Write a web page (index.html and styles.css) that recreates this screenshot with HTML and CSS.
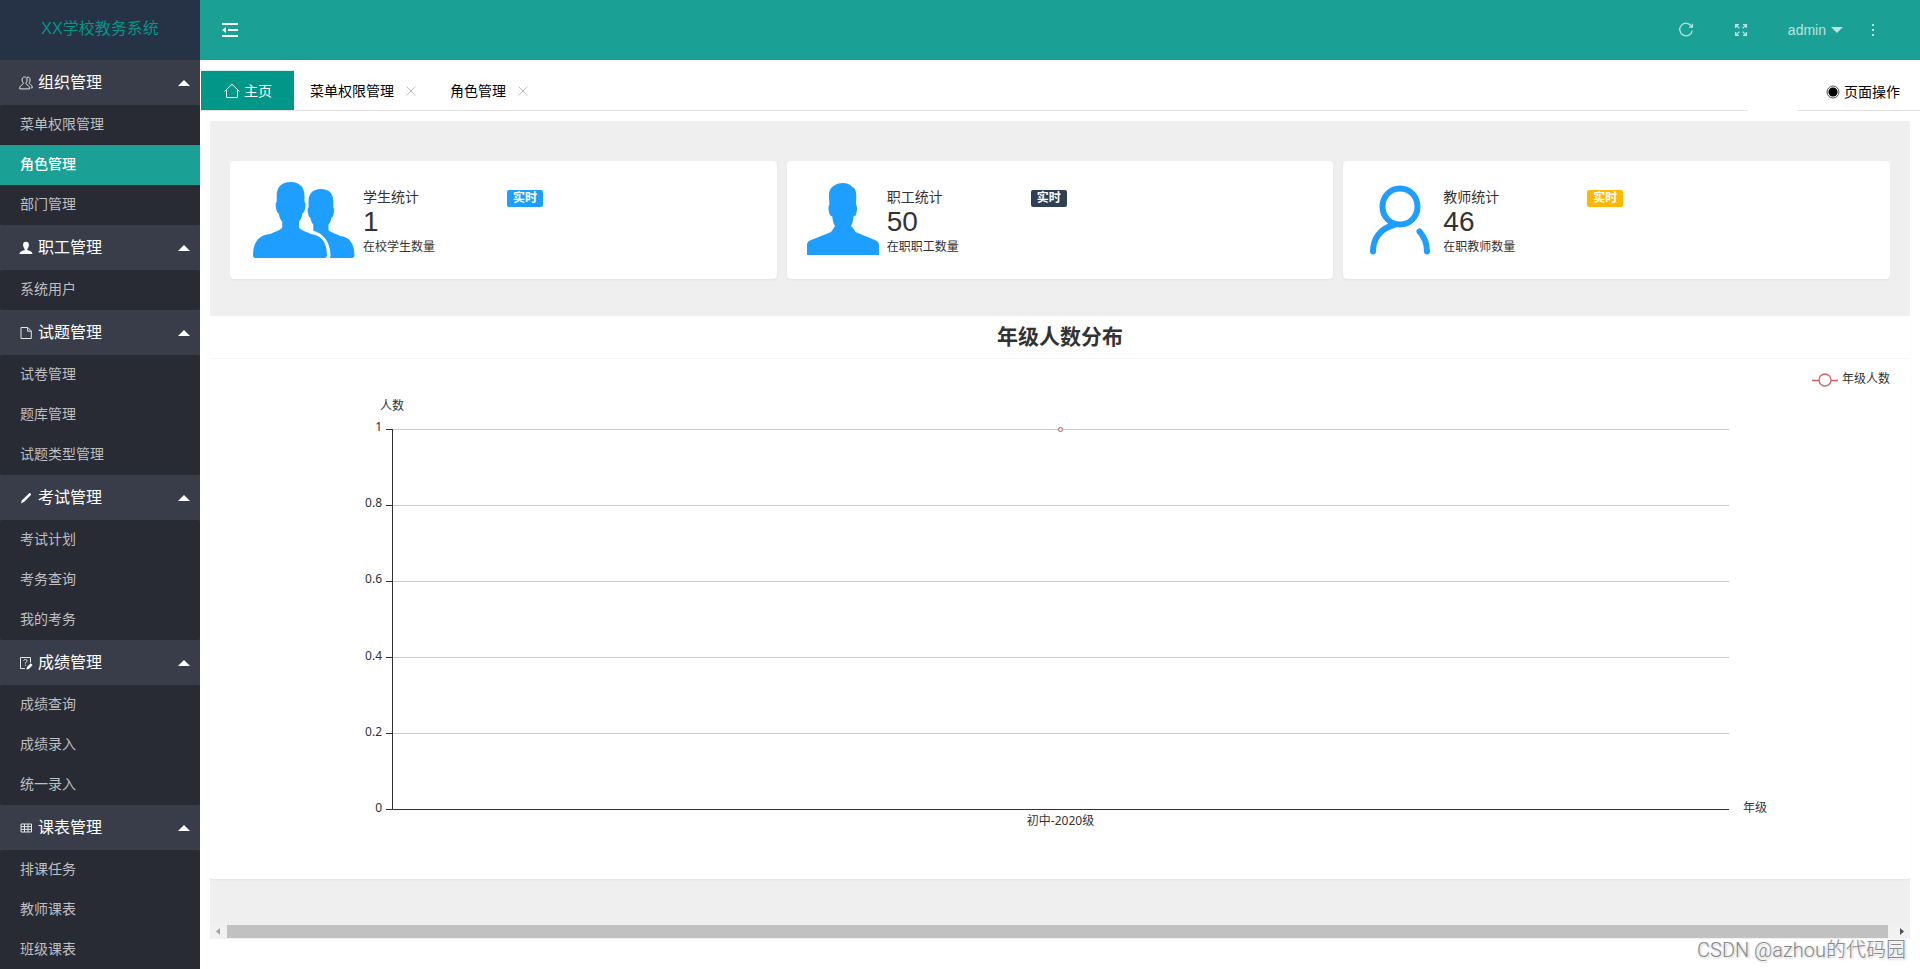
FILE: index.html
```html
<!DOCTYPE html>
<html lang="zh-CN">
<head>
<meta charset="utf-8">
<title>XX学校教务系统</title>
<link rel="stylesheet" href="styles.css">
</head>
<body>
<div class="app">
  <aside class="sidebar">
    <div class="logo">XX学校教务系统</div>
    <nav class="menu">
      <button class="group" type="button">
        <svg class="group-icon" viewBox="0 0 14 14"><path d="M5.6 1C3.700 1 3 2.400 3.100 4c.1 1.400.6 2.200 1.100 2.900.3.9-.1 1.300-1 1.800C1.600 9.600.8 10.400.7 12.900h9.800c-.1-2.500-.9-3.300-2.500-4.200-.9-.5-1.300-.9-1-1.800.5-.7 1-1.500 1.100-2.900C8.200 2.400 7.500 1 5.600 1z"/><path d="M8 1.300c1.700-.6 3.200.5 3.100 2.600 0 1.300-.4 2-.9 2.600-.3.8.1 1.100.9 1.600 1.400.9 2.100 1.900 2.200 3.800h-1.600"/></svg>
        <span>组织管理</span><i class="caret-up"></i>
      </button>
      <div class="items">
        <a href="#">菜单权限管理</a>
        <a href="#" class="current">角色管理</a>
        <a href="#">部门管理</a>
      </div>
      <button class="group" type="button">
        <svg class="group-icon" viewBox="0 0 14 14"><path class="solid" d="M7 .8C4.900.8 4 2 4.100 4.100c.1 1.800.7 3 1.600 3.900v1.100C4.500 9.800.6 10.100.5 13h13c-.1-2.900-4-3.200-5.200-3.900V8c.9-.9 1.500-2.100 1.600-3.900C10 2 9.100.8 7 .8z"/></svg>
        <span>职工管理</span><i class="caret-up"></i>
      </button>
      <div class="items">
        <a href="#">系统用户</a>
      </div>
      <button class="group" type="button">
        <svg class="group-icon" viewBox="0 0 14 14"><path d="M2 1.500h6.800L12.300 5v7.500H2zM8.600 1.700v3.500h3.500"/></svg>
        <span>试题管理</span><i class="caret-up"></i>
      </button>
      <div class="items">
        <a href="#">试卷管理</a>
        <a href="#">题库管理</a>
        <a href="#">试题类型管理</a>
      </div>
      <button class="group" type="button">
        <svg class="group-icon" viewBox="0 0 14 14"><path class="solid" d="M10.200 2.200c.8-.6 2.400.9 1.700 1.800L5.300 10.800l-3.300 1.600 1-3.200z"/></svg>
        <span>考试管理</span><i class="caret-up"></i>
      </button>
      <div class="items">
        <a href="#">考试计划</a>
        <a href="#">考务查询</a>
        <a href="#">我的考务</a>
      </div>
      <button class="group" type="button">
        <svg class="group-icon" viewBox="0 0 14 14"><path d="M6 12.500H1.500v-11h10V6.500M4.700 4.900c0-2 3.500-1.900 3.400 0C8 6 6.400 6 6.400 7.600M6.400 8.700v1"/><path class="solid" d="M11.700 7.300l1.900 1.800-3.700 3.800-2.500.7.600-2.500z"/></svg>
        <span>成绩管理</span><i class="caret-up"></i>
      </button>
      <div class="items">
        <a href="#">成绩查询</a>
        <a href="#">成绩录入</a>
        <a href="#">统一录入</a>
      </div>
      <button class="group" type="button">
        <svg class="group-icon" viewBox="0 0 14 14"><path d="M2 3h10.500v8H2zM2 5.600h10.500M2 8.300h10.500M5.500 3v8M9 3v8"/></svg>
        <span>课表管理</span><i class="caret-up"></i>
      </button>
      <div class="items">
        <a href="#">排课任务</a>
        <a href="#">教师课表</a>
        <a href="#">班级课表</a>
      </div>
    </nav>
  </aside>

  <div class="page">
    <header class="topbar">
      <button class="icon-btn" type="button" aria-label="收起菜单">
        <svg width="16" height="16" viewBox="0 0 16 16"><path fill="#fff" d="M0 1h16v2H0zM6 7h10v2H6zM0 13h16v2H0zM0 8l4-3v6z"/></svg>
      </button>
      <div class="tools">
        <button class="icon-btn" type="button" aria-label="刷新">
          <svg width="16" height="16" viewBox="0 0 16 16"><path class="tool-line" d="M13.600 4.500A6.300 6.300 0 1 0 14.300 8.500M14.400 1.800v3.400h-3.400"/></svg>
        </button>
        <button class="icon-btn" type="button" aria-label="全屏">
          <svg width="14" height="14" viewBox="0 0 14 14"><path class="tool-line" d="M1.600 5V1.600H5M9 1.600h3.400V5M12.400 9v3.400H9M5 12.400H1.600V9M2 2l3.400 3.400M12 2L8.600 5.400M12 12L8.600 8.600M2 12l3.400-3.400"/></svg>
        </button>
        <button class="user" type="button">admin<i class="caret-down"></i></button>
        <button class="icon-btn more" type="button" aria-label="更多">
          <svg width="4" height="14" viewBox="0 0 4 14"><path class="tool-fill" d="M1 1h2v2H1zM1 6h2v2H1zM1 11h2v2H1z"/></svg>
        </button>
      </div>
    </header>

    <div class="tabbar">
      <div class="tabs">
        <button class="tab active" type="button">
          <svg width="18" height="16" viewBox="0 0 18 16"><path d="M1.500 8.500L9 1.300l7.500 7.200M3.500 7v7.500h11V7" fill="none" stroke="#fff" stroke-width="1"/></svg>
          <span>主页</span>
        </button>
        <button class="tab" type="button"><span>菜单权限管理</span>
          <svg class="close" width="18" height="18" viewBox="0 0 18 18"><path d="M4.500 4.500l9 9M13.500 4.500l-9 9"/></svg>
        </button>
        <button class="tab" type="button"><span>角色管理</span>
          <svg class="close" width="18" height="18" viewBox="0 0 18 18"><path d="M4.500 4.500l9 9M13.500 4.500l-9 9"/></svg>
        </button>
      </div>
      <button class="page-ops" type="button">
        <svg width="14" height="14" viewBox="0 0 14 14"><circle cx="7" cy="7" r="6" fill="none" stroke="#555"/><circle cx="7" cy="7" r="4.600"/></svg>
        <span>页面操作</span>
      </button>
    </div>

    <main class="content">
      <section class="cards">
        <article class="card">
          <svg class="pic-pair" width="103" height="78" viewBox="0 0 103 78"><path d="M38.500 1C29 1 24.500 7 24.700 15v6c-1.500 1-1.200 4 .2 9.600.4 1.400 1.400 1.200 1.800 1.600.5 4 2 6.800 3.500 8.600v5.600c-1.500 2.600-8 4.600-12 6.600C7 54 1 61 1 74.500c0 1.600 1 2.500 2.500 2.500h69c1.500 0 2.500-.9 2.500-2.500C75 61 69 54 59 53c-4-2-10.500-4-12-6.600v-5.600c1.500-1.800 3-4.600 3.500-8.600.4-.4 1.400-.2 1.800-1.600 1.400-5.600 1.700-8.600.2-9.600v-6C52.700 7 48 1 38.500 1z"/><path d="M69 8c-9 0-12.700 5.500-12.500 13v5.500c-1.300 1-1 3.800.2 8.600.4 1.300 1.200 1.100 1.600 1.500.5 3.500 1.700 5.500 3 7.200v6c8 2 17.200 9.500 17.200 25.200 0 .8-.3 1.400-.7 2H100c1.500 0 2.500-.9 2.500-2.500C102.500 63 97.500 55.500 88 55c-5-2.500-10-4-11.500-6v-5.200c1.300-1.700 2.500-3.700 3-7.200.4-.4 1.200-.2 1.600-1.500 1.200-4.800 1.500-7.600.2-8.600V21C81.500 13.500 78 8 69 8z"/></svg>
          <div class="stat"><h3>学生统计</h3><strong>1</strong><p>在校学生数量</p></div>
          <span class="badge blue">实时</span>
        </article>
        <article class="card">
          <svg class="pic-one" width="72" height="74" viewBox="0 0 72 74"><path d="M36 1c-4 0-7 1-9.500 3C22.500 6.500 21.700 11 22 16l.5 6.500c-1.500 1-1.200 6 .3 10 .5 1.500 2 1.500 2.500 2 .3 4 1 7 2.700 9.500-1 2-2.500 4-4 6L3 58.500c-2 1-3 2.500-3 4.500v10h72V63c0-2-1-3.500-3-4.500L48.500 50c-1-2-2-4-4.500-6 1.500-2.500 2.200-5.500 2.500-9.500 1-.5 2-.5 2.500-2 1.500-4 1.300-9 0-10l.3-6.500c.2-5-.6-10-4-11C43 2.500 40 1 36 1z"/></svg>
          <div class="stat"><h3>职工统计</h3><strong>50</strong><p>在职职工数量</p></div>
          <span class="badge navy">实时</span>
        </article>
        <article class="card">
          <svg class="pic-line" width="62" height="70" viewBox="0 0 62 70"><path d="M31 3.500c-10 0-17.500 8-17.500 18S21 39.500 31 39.500s17.500-8 17.500-18-7.500-18-17.500-18zM25 40C11 43.500 4 54 4 66.500M50.500 46.500c4.500 5 7.500 12 7.500 20"/></svg>
          <div class="stat"><h3>教师统计</h3><strong>46</strong><p>在职教师数量</p></div>
          <span class="badge amber">实时</span>
        </article>
      </section>

      <section class="panel">
        <h2>年级人数分布</h2>
        <div class="legend">
          <svg width="26" height="14" viewBox="0 0 26 14"><path d="M0 7.500h7M19 7.500h7"/><circle cx="13" cy="7" r="6"/></svg>
          <span>年级人数</span>
        </div>
        <div class="chart">
          <div class="y-name">人数</div>
          <div class="y-labels"><span>1</span><span>0.8</span><span>0.6</span><span>0.4</span><span>0.2</span><span>0</span></div>
          <div class="ticks"><i></i><i></i><i></i><i></i><i></i></div>
          <div class="plot">
            <i></i><i></i><i></i><i></i><i></i>
            <svg class="point" width="7" height="7" viewBox="0 0 7 7"><circle cx="3.500" cy="3.500" r="2" fill="#fff" stroke="#d0504d"/></svg>
          </div>
          <div class="x-name">年级</div>
          <div class="x-label">初中-2020级</div>
        </div>
      </section>

      <div class="scrollbar">
        <svg width="17" height="15" viewBox="0 0 17 15"><path d="M10 4v7L6 7.500z" fill="#a3a3a3"/></svg>
        <div class="thumb"></div>
        <svg width="22" height="15" viewBox="0 0 22 15"><path d="M12 4v7l4-3.500z" fill="#505050"/></svg>
      </div>
    </main>
  </div>
  <div class="watermark">CSDN @azhou的代码园</div>
</div>
</body>
</html>
```
FILE: styles.css
```css
* { box-sizing: border-box; }
body {
  margin: 0;
  font: 14px/24px "Liberation Sans", "Noto Sans CJK SC", sans-serif;
  color: #333;
  background: #fff;
}
button {
  border: 0;
  padding: 0;
  background: none;
  font: inherit;
  color: inherit;
  text-align: left;
  cursor: pointer;
}
h2, h3, p { margin: 0; font-weight: normal; }
svg { flex: none; display: block; }

.app {
  position: relative;
  display: flex;
  height: 100vh;
  overflow: hidden;
}

/* Sidebar */
.sidebar {
  flex: none;
  width: 200px;
  background: #393d49;
  overflow: hidden;
}
.logo {
  height: 60px;
  line-height: 58px;
  text-align: center;
  font-size: 16px;
  font-family: "Liberation Sans", "Noto Sans CJK SC", sans-serif;
  color: #009688;
  background: #263347;
}
.group {
  display: flex;
  align-items: center;
  gap: 5px;
  width: 100%;
  height: 45px;
  padding: 0 10px 0 19px;
  font-size: 16px;
  color: #fff;
}
.group-icon {
  width: 14px;
  height: 14px;
  fill: none;
  stroke: #e4e5e7;
  stroke-width: 1;
}
.group-icon .solid { fill: #fff; stroke: none; }
.caret-up {
  margin-left: auto;
  border: 6px solid transparent;
  border-top: 0;
  border-bottom-color: #fff;
}
.items {
  background: #282b33;
  border-radius: 2px;
  overflow: hidden;
}
.items a {
  display: block;
  height: 40px;
  padding-left: 20px;
  line-height: 39px;
  color: #bfbfc2;
  text-decoration: none;
}
.items .current { background: #1aa094; color: #fff; font-weight: 500; }

/* Top bar */
.page { flex: 1; min-width: 0; }
.topbar {
  display: flex;
  align-items: center;
  justify-content: space-between;
  height: 60px;
  padding: 0 45px 0 22px;
  background: #1aa094;
}
.tools { display: flex; align-items: center; gap: 40px; color: #bae3df; }
.user { display: flex; align-items: center; gap: 5px; }
.more { margin-left: -12px; }
.caret-down {
  border: 6px solid transparent;
  border-bottom: 0;
  border-top-color: #bae3df;
}
.tool-line { fill: none; stroke: #bae3df; stroke-width: 1.3; }
.tool-fill { fill: #bae3df; }

/* Tabs */
.tabbar {
  display: flex;
  align-items: flex-end;
  gap: 49px;
  height: 51px;
}
.tabs {
  flex: 1;
  display: flex;
  height: 41px;
  padding-left: 1px;
  border-bottom: 1px solid #e2e2e2;
}
.tab {
  display: flex;
  align-items: center;
  gap: 8px;
  height: 40px;
  padding: 2px 15px 0;
  color: #000;
}
.tab.active {
  gap: 3px;
  margin-right: 1px;
  padding: 0 22px;
  background: #009688;
  border-top: 1px solid #d8ecea;
  color: #fff;
}
.close { fill: none; stroke: #bbb; stroke-width: 1; }
.page-ops {
  display: flex;
  align-items: center;
  gap: 4px;
  height: 41px;
  padding: 4px 20px 0 29px;
  border-bottom: 1px solid #e2e2e2;
  color: #000;
}

/* Content */
.content {
  margin: 10px 10px 0;
  background: #efefef;
}
.cards {
  display: grid;
  grid-template-columns: repeat(3, 1fr);
  gap: 10px;
  padding: 40px 20px 37px;
}
.card {
  display: flex;
  align-items: flex-start;
  height: 118px;
  border-radius: 4px;
  background: #fff;
  box-shadow: 0 1px 2px rgba(0, 0, 0, .05);
  fill: #1e9fff;
}
.pic-pair { margin: 20px 8px 0 22px; }
.pic-one { margin: 21px 8px 0 20px; }
.pic-line {
  margin: 24px 12px 0 26px;
  fill: none;
  stroke: #1e9fff;
  stroke-width: 6;
  stroke-linecap: round;
}
.stat {
  width: 144px;
  padding-top: 25px;
}
.stat h3 { font-size: 14px; line-height: 22px; }
.stat strong { display: block; font-size: 28px; font-weight: normal; line-height: 28px; }
.stat p { font-size: 12px; line-height: 22px; }
.badge {
  height: 17px;
  margin-top: 29px;
  padding: 0 6px;
  border-radius: 2px;
  font-size: 12px;
  font-weight: bold;
  line-height: 16px;
  color: #fff;
}
.blue { background: #1e9fff; }
.navy { background: #2f4056; }
.amber { background: #ffb800; }

/* Chart panel */
.panel {
  height: 563px;
  border-radius: 2px;
  background: #fff;
  box-shadow: 0 1px 2px rgba(0, 0, 0, .05);
}
.panel h2 {
  height: 43px;
  border-bottom: 1px solid #f6f6f6;
  font-size: 21px;
  font-weight: bold;
  line-height: 42px;
  text-align: center;
}
.legend {
  display: flex;
  align-items: center;
  justify-content: flex-end;
  gap: 4px;
  height: 38px;
  padding: 4px 20px 0 0;
  font-size: 12px;
  line-height: 20px;
}
.legend span { padding-bottom: 3px; }
.legend svg { fill: none; stroke: #d0625f; stroke-width: 1.3; }
.chart {
  display: grid;
  grid-template-columns: 174px 8px 1fr 181px;
  grid-template-rows: 32px 381px 24px;
  font: 12px/16px "Noto Sans", "Noto Sans CJK SC", sans-serif;
}
.y-name { grid-area: 1 / 1 / 2 / 4; padding: 1px 0 0 170px; }
.y-labels {
  grid-area: 2 / 1;
  display: flex;
  flex-direction: column;
  justify-content: space-between;
  margin: -10px 0 -6px;
  padding-right: 2px;
  text-align: right;
}
.ticks, .plot { display: flex; flex-direction: column; }
.ticks { grid-area: 2 / 2; margin-left: 2px; border-bottom: 1px solid #333; }
.plot {
  grid-area: 2 / 3;
  position: relative;
  border-left: 1px solid #333;
  border-bottom: 1px solid #333;
}
.ticks i, .plot i { flex: 1; border-top: 1px solid #ccc; }
.ticks i { border-top-color: #333; }
.point { position: absolute; top: -3px; left: 50%; margin-left: -4px; }
.x-name { grid-area: 2 / 4; align-self: end; margin-bottom: -6px; padding-left: 14px; }
.x-label {
  grid-area: 3 / 3;
  padding-top: 3px;
  text-align: center;
}

/* Horizontal scrollbar */
.scrollbar {
  display: flex;
  align-items: center;
  height: 15px;
  margin-top: 45px;
  background: #f1f1f1;
}
.thumb { flex: 1; height: 13px; background: #c1c1c1; }

.watermark {
  position: absolute;
  right: 14px;
  bottom: 7px;
  font: 300 20px/24px Roboto, "Noto Sans CJK SC", sans-serif;
  color: #8a8a8a;
  text-shadow: 1px 1px 1px #fff, 1px 1px 2px #999;
}
```
